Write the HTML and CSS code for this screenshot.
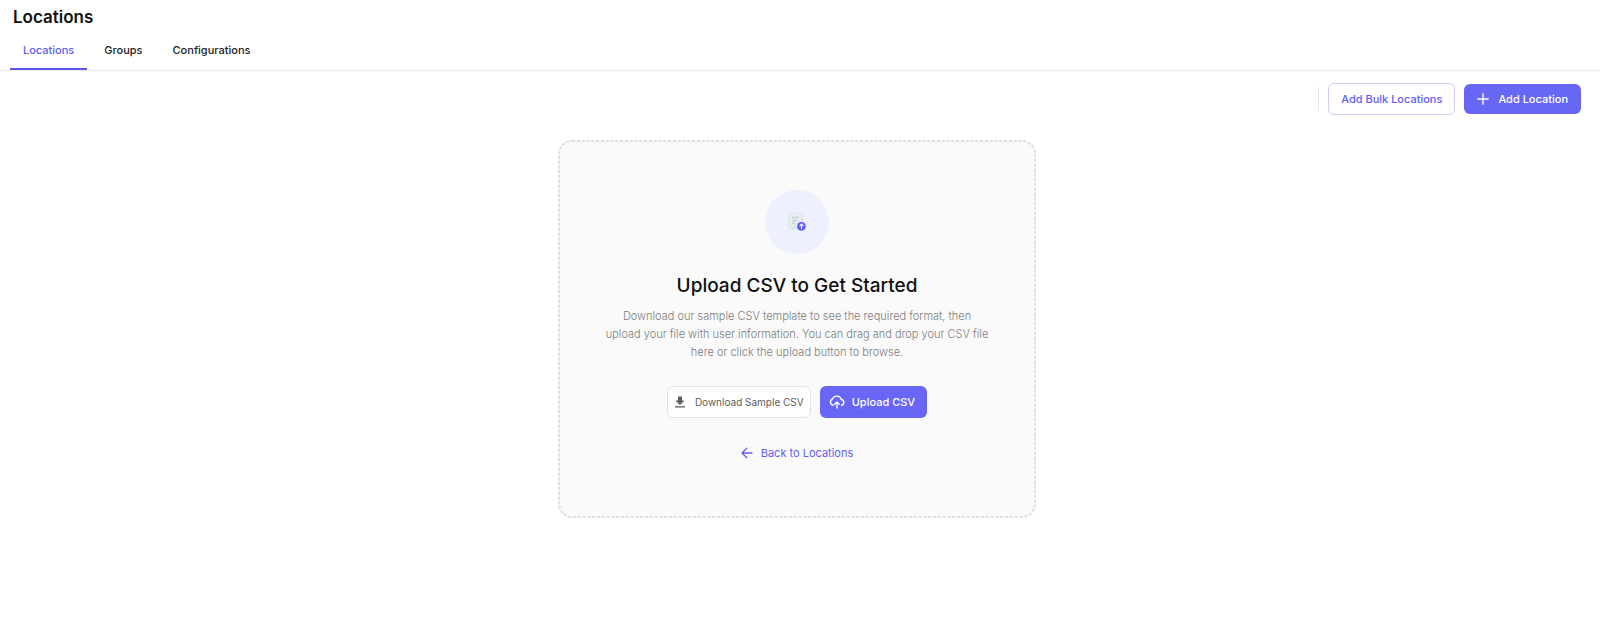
FILE: index.html
```html
<!DOCTYPE html>
<html lang="en">
<head>
<meta charset="utf-8">
<meta name="viewport" content="width=device-width, initial-scale=1">
<title>Locations</title>
<link rel="stylesheet" href="styles.css">
</head>
<body>
<header class="page-header">
  <h1 class="page-title">Locations</h1>
  <nav class="tabs" aria-label="Sections">
    <a class="tab tab-active" href="#locations" aria-current="page">Locations</a>
    <a class="tab" href="#groups">Groups</a>
    <a class="tab" href="#configurations">Configurations</a>
  </nav>
</header>
<main class="content">
  <div class="toolbar">
    <span class="divider"></span>
    <button class="button button-outline" type="button">Add Bulk Locations</button>
    <button class="button button-primary button-add" type="button">
      <svg class="icon-plus" viewBox="0 0 12 12" aria-hidden="true"><path d="M6 .8v10.4M.8 6h10.4" fill="none" stroke="currentColor" stroke-width="1.4" stroke-linecap="round"/></svg>
      Add Location
    </button>
  </div>
  <section class="dropzone">
    <svg class="dropzone-outline" aria-hidden="true"><rect width="100%" height="100%" rx="13" fill="none" stroke="#e0e0e0" stroke-width="2" stroke-dasharray="3.2 1.6"/></svg>
    <div class="badge">
      <svg class="icon-file" viewBox="0 0 20 20" aria-hidden="true">
        <defs><linearGradient id="sheet" x1="0" y1="0" x2="0" y2="1"><stop offset="0" stop-color="#eaeff3"/><stop offset="1" stop-color="#e1e9ea"/></linearGradient></defs>
        <rect x="1.5" y="1" width="14" height="16" rx="3" fill="url(#sheet)" stroke="#dae2e7" stroke-width=".8"/>
        <path d="M5 5.500h6.500M5 8.400h5M5 11.200h2.400" fill="none" stroke="#c8d1d8" stroke-width="1.500"/>
        <circle cx="14.500" cy="14.400" r="4.300" fill="#5d5bf0"/>
        <path d="M14.500 17.200v-4.800M12.600 14l1.900-1.900 1.900 1.900" fill="none" stroke="#e6e7ff" stroke-width="1.200"/>
      </svg>
    </div>
    <h2 class="dropzone-title">Upload CSV to Get Started</h2>
    <p class="dropzone-text">Download our sample CSV template to see the required format, then<br>
      upload your file with user information. You can drag and drop your CSV file<br>
      here or click the upload button to browse.</p>
    <div class="actions">
      <button class="button button-plain" type="button">
        <svg class="icon-download" viewBox="0 0 12 12" aria-hidden="true"><path d="M4 .5h4v4h2.600L6 9 1.400 4.500H4zM1 10.300h10v1.200H1z" fill="currentColor"/></svg>
        Download Sample CSV
      </button>
      <button class="button button-primary button-upload" type="button">
        <svg class="icon-cloud" viewBox="0 0 16 16" aria-hidden="true"><path d="M4.200 11.200A3.300 3.300 0 0 1 3.500 4.900 4.700 4.700 0 0 1 12.300 5.500 2.900 2.900 0 0 1 12.500 11.200M8 14V8.200M5.700 10.200 8 7.900l2.300 2.300" fill="none" stroke="currentColor" stroke-width="1.400" stroke-linecap="round" stroke-linejoin="round"/></svg>
        Upload CSV
      </button>
    </div>
    <a class="back-link" href="#locations">
      <svg class="icon-back" viewBox="0 0 12 12" aria-hidden="true"><path d="M11 6H1.200M5.800 1.200 1 6l4.800 4.800" fill="none" stroke="currentColor" stroke-width="1.300" stroke-linecap="round" stroke-linejoin="round"/></svg>
      Back to Locations
    </a>
  </section>
</main>
</body>
</html>
```
FILE: styles.css
```css
* { box-sizing: border-box; }

body {
  margin: 0;
  background: #fff;
  color: #111;
  font-family: Inter, "Open Sans", sans-serif;
  font-size: 11px;
}

.page-header { border-bottom: 1px solid #ebebeb; }

.page-title {
  margin: 0;
  padding: 5px 13px 0;
  font-size: 17px;
  line-height: 24px;
  font-weight: 600;
}

.tabs {
  display: flex;
  gap: 4px;
  padding-left: 10px;
}

.tab {
  padding: 12px 13px 9px;
  border-bottom: 2px solid transparent;
  color: #222;
  line-height: 18px;
  font-weight: 500;
  text-decoration: none;
}

.tab-active {
  border-color: #5855eb;
  color: #605df0;
}

.content { padding: 12px 19px 24px 13px; }

.toolbar {
  display: flex;
  align-items: center;
  justify-content: flex-end;
  gap: 9px;
}

.divider {
  width: 1px;
  height: 24px;
  background: #e6e6ea;
}

.button {
  display: inline-flex;
  align-items: center;
  justify-content: center;
  gap: 9px;
  height: 32px;
  padding: 0 12px;
  border: 1px solid transparent;
  border-radius: 6px;
  font-family: inherit;
  font-size: 11px;
  font-weight: 500;
  white-space: nowrap;
}

.button-outline {
  border-color: #cfcdfb;
  background: #fff;
  color: #625ff0;
}

.button-primary {
  background: #6866f4;
  color: #fff;
}

.button-add { height: 30px; }

.button-plain {
  padding: 0 6px;
  border-color: #e3e3e3;
  background: #fff;
  color: #5c5c5c;
  font-size: 10px;
  font-weight: 400;
}

.button-upload {
  gap: 7px;
  padding: 0 11px 0 8px;
}

.dropzone {
  position: relative;
  display: flex;
  flex-direction: column;
  align-items: center;
  max-width: 478px;
  margin: 25px auto 0;
  padding: 50px 32px 56px;
  border-radius: 14px;
  background: #fafafa;
  text-align: center;
}

.dropzone-outline {
  position: absolute;
  top: 1px;
  left: 1px;
  width: calc(100% - 2px);
  height: calc(100% - 2px);
  overflow: visible;
  pointer-events: none;
}

.badge {
  display: flex;
  align-items: center;
  justify-content: center;
  width: 64px;
  height: 64px;
  border-radius: 50%;
  background: #eef0ff;
}

.dropzone-title {
  margin: 18px 0 0;
  font-size: 19px;
  line-height: 28px;
  font-weight: 500;
}

.dropzone-text {
  margin: 7px 0 0;
  color: #7d7d7d;
  font-size: 11px;
  font-weight: 300;
  line-height: 18px;
}

.actions {
  display: flex;
  gap: 9px;
  margin-top: 25px;
}

.back-link {
  display: inline-flex;
  align-items: center;
  gap: 8px;
  margin-top: 26px;
  color: #625ff0;
  line-height: 18px;
  text-decoration: none;
}

.icon-plus, .icon-download, .icon-back { width: 12px; height: 12px; }
.icon-cloud { width: 16px; height: 16px; }
.icon-file { width: 20px; height: 20px; }
```
